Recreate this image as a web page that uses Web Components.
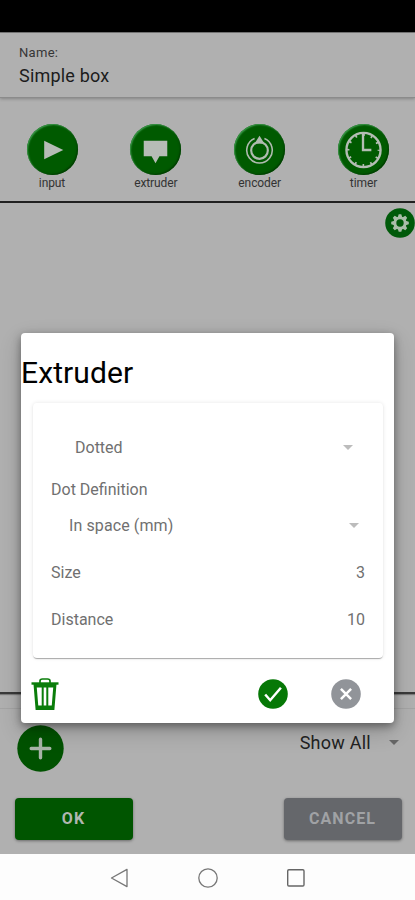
<!DOCTYPE html>
<html lang="en">
<head>
<meta charset="utf-8">
<title>Simple box</title>
<style>
html, body {
    margin: 0;
    height: 100%;
    overflow: hidden;
    background: #b0b0b0;
    font-family: Roboto, "Noto Sans", sans-serif;
}
</style>
</head>
<body>
<app-screen>
    <name-field slot="header" label="Name:" value="Simple box"></name-field>
    <tool-button slot="tools" icon="play" label="input"></tool-button>
    <tool-button slot="tools" icon="extruder" label="extruder"></tool-button>
    <tool-button slot="tools" icon="encoder" label="encoder"></tool-button>
    <tool-button slot="tools" icon="clock" label="timer"></tool-button>
    <app-icon slot="canvas" name="gear" size="30"></app-icon>
    <app-icon slot="filter" name="plus" size="47"></app-icon>
    <select-box slot="filter" class="show">Show All</select-box>
    <action-button slot="actions" color="#005500" textcolor="#b0b7b0">OK</action-button>
    <action-button slot="actions" color="#65676b" textcolor="#a0a2a5">CANCEL</action-button>
    <edit-dialog slot="dialog" heading="Extruder">
        <select-box class="first">Dotted</select-box>
        <field-row label="Dot Definition" style="height:40px"></field-row>
        <select-box class="second">In space (mm)</select-box>
        <field-row label="Size" value="3" style="height:62px"></field-row>
        <field-row label="Distance" value="10" style="height:32px"></field-row>
    </edit-dialog>
</app-screen>

<script>
const icons = {
    play: `<svg viewBox="0 0 52 52"><path fill="#b6bcb6" d="M17.500 17v19l19.500-9.500z"/></svg>`,
    extruder: `<svg viewBox="0 0 52 52"><path fill="#b6bcb6" d="M14 17h24v16h-8l-4 7-4-7h-8z"/></svg>`,
    encoder: `<svg viewBox="0 0 52 52" fill="none" stroke="#b0bbb0"><circle cx="26" cy="27" r="8.500" stroke-width="2.200"/><path stroke-width="1.600" d="M21 14.800a13 13 0 1 0 10 0"/><path fill="#b0bbb0" stroke="none" d="M26 12l-5 8h10z"/></svg>`,
    clock: `<svg viewBox="0 0 52 52" fill="none" stroke="#b4bdb4"><circle cx="26" cy="26.500" r="17.400" stroke-width="2.400"/><circle cx="26" cy="26.500" r="15.600" stroke-width="2.500" stroke-dasharray="1.800 6.368" stroke-dashoffset=".9"/><path stroke-width="2.400" d="M25.500 10v16.500H34"/></svg>`,
    gear: `<svg viewBox="0 0 30 30"><circle cx="15" cy="15" r="14.800" fill="#005a0a"/><g fill="#a9bda9"><circle cx="15" cy="15" r="6.600"/><g id="t"><path d="M12.700 9.500l1-3.300h2.600l1 3.300zM12.700 20.500l1 3.300h2.600l1-3.300zM9.500 12.700l-3.300 1v2.600l3.300 1zM20.500 12.700l3.300 1v2.600l-3.300 1z"/></g><use href="#t" transform="rotate(45 15 15)"/></g><circle cx="15" cy="15" r="3.700" fill="#005a0a"/></svg>`,
    plus: `<svg viewBox="0 0 47 47"><circle cx="23.500" cy="23.500" r="23.200" fill="#005200"/><path stroke="#a9b5a9" stroke-width="3.400" stroke-linecap="round" d="M23.500 14.200v18.600M14.200 23.500h18.600"/></svg>`,
    trash: `<svg viewBox="0 0 28 34"><g fill="none" stroke="#0a7d0a"><path stroke-width="1.700" d="M9 6V4q0-2 2.500-2h5Q19 2 19 4v2"/><path stroke-width="2.400" d="M.5 6.500h27"/><path stroke-width="3" d="M4 7l2 24.500h16L24 7"/><path stroke-width="2" d="M11.700 10v21M16.300 10v21"/><path stroke-width="4" d="M4.500 8.500h19M5.500 30.500h17"/></g></svg>`,
    check: `<svg viewBox="0 0 30 30"><circle cx="15" cy="15" r="14.800" fill="#067806"/><path fill="none" stroke="#fff" stroke-width="2.500" d="M7.200 15.500l5 5.700L22.900 8.800"/></svg>`,
    close: `<svg viewBox="0 0 30 30"><circle cx="15" cy="15" r="14.800" fill="#919499"/><path stroke="#fff" stroke-width="2.500" d="M9.900 9.900l10.200 10.200M20.100 9.900L9.900 20.100"/></svg>`,
    back: `<svg viewBox="0 0 20 20" fill="none" stroke="#777" stroke-width="1.300"><path stroke-linejoin="round" d="M17 1.400v17.200L1.500 10z"/></svg>`,
    home: `<svg viewBox="0 0 20 20" fill="none" stroke="#777" stroke-width="1.300"><circle cx="10" cy="10" r="9.200"/></svg>`,
    recent: `<svg viewBox="0 0 20 20" fill="none" stroke="#666" stroke-width="1.400"><rect x="1.700" y="1.700" width="16.300" height="16.300" rx="1.200"/></svg>`
};

class AppIcon extends HTMLElement {
    constructor() {
        super();
        this.attachShadow({ mode: "open" });
    }
    connectedCallback() {
        const size = this.getAttribute("size");
        const height = this.getAttribute("height") || size;
        this.shadowRoot.innerHTML = `
<style>
:host { display: block; flex: none; width: ${size}px; height: ${height}px; }
svg { display: block; width: 100%; height: 100%; }
</style>
${icons[this.getAttribute("name")]}`;
    }
}
window.customElements.define("app-icon", AppIcon);

class NameField extends HTMLElement {
    constructor() {
        super();
        this.attachShadow({ mode: "open" });
        this.shadowRoot.innerHTML = `
<style>
:host { display: flex; flex-direction: column; padding: 12px 19px 0; }
label { font-size: 13px; line-height: 16px; color: #363636; letter-spacing: .3px; }
span { font-size: 18px; line-height: 22px; margin-top: 4px; color: #1c1c1c; letter-spacing: .2px; }
</style>
<label>${this.getAttribute("label")}</label>
<span>${this.getAttribute("value")}</span>`;
    }
}
window.customElements.define("name-field", NameField);

class ToolButton extends HTMLElement {
    constructor() {
        super();
        this.attachShadow({ mode: "open" });
        this.shadowRoot.innerHTML = `
<style>
:host { display: flex; flex-direction: column; align-items: center; width: 52px; }
.disc {
    width: 51px;
    height: 51px;
    border-radius: 50%;
    background: #005a00;
    box-shadow: inset 1px 1px 1.500px #3c9a4c, inset -1px -1px 1.500px #003c00;
}
span { font-size: 12px; line-height: 14px; margin-top: 1px; color: #333; letter-spacing: -.1px; }
</style>
<div class="disc"><app-icon name="${this.getAttribute("icon")}" size="51"></app-icon></div>
<span>${this.getAttribute("label")}</span>`;
    }
}
window.customElements.define("tool-button", ToolButton);

class SelectBox extends HTMLElement {
    constructor() {
        super();
        this.attachShadow({ mode: "open" });
        this.shadowRoot.innerHTML = `
<style>
:host {
    display: flex;
    align-items: center;
    justify-content: space-between;
    box-sizing: border-box;
    font-size: 16px;
    color: #707070;
    --arrow: #bcbcbc;
}
:host(.first) { height: 44px; padding: 0 12px 0 24px; }
:host(.second) { height: 32px; padding: 0 6px 0 18px; letter-spacing: .1px; }
:host(.show) { font-size: 18px; gap: 18px; color: #222; letter-spacing: .25px; --arrow: #666; margin-top: -13px; }
i { border: 5.500px solid transparent; border-top: 5.500px solid var(--arrow); border-bottom: 0; }
</style>
<span><slot></slot></span><i></i>`;
    }
}
window.customElements.define("select-box", SelectBox);

class FieldRow extends HTMLElement {
    constructor() {
        super();
        this.attachShadow({ mode: "open" });
        this.shadowRoot.innerHTML = `
<style>
:host { display: flex; align-items: center; justify-content: space-between; font-size: 16px; color: #707070; }
</style>
<span>${this.getAttribute("label")}</span>
<span>${this.getAttribute("value") || ""}</span>`;
    }
}
window.customElements.define("field-row", FieldRow);

class ActionButton extends HTMLElement {
    constructor() {
        super();
        this.attachShadow({ mode: "open" });
        this.shadowRoot.innerHTML = `
<style>
:host { display: block; width: 118px; height: 42px; }
button {
    width: 100%;
    height: 100%;
    padding: 0 0 1px;
    border: 0;
    border-radius: 4px;
    font: 700 16px Roboto, sans-serif;
    letter-spacing: 1.100px;
    box-shadow: 0 1px 3px rgba(0, 0, 0, .4);
}
</style>
<button><slot></slot></button>`;
        const button = this.shadowRoot.querySelector("button");
        button.style.background = this.getAttribute("color");
        button.style.color = this.getAttribute("textcolor");
    }
}
window.customElements.define("action-button", ActionButton);

class EditDialog extends HTMLElement {
    constructor() {
        super();
        this.attachShadow({ mode: "open" });
        this.shadowRoot.innerHTML = `
<style>
:host {
    display: flex;
    flex-direction: column;
    box-sizing: border-box;
    width: 373px;
    height: 390px;
    border-radius: 4px;
    background: #fff;
    box-shadow: 0 3px 8px rgba(0, 0, 0, .38), 0 8px 22px rgba(0, 0, 0, .2);
}
h2 { margin: 22px 0 0; font-size: 30px; line-height: 36px; font-weight: 400; color: #000; letter-spacing: .1px; }
.card {
    margin: 12px 11px 0 12px;
    height: 255px;
    box-sizing: border-box;
    padding: 22px 18px 0;
    border-radius: 4px;
    box-shadow: 0 2px 1px -1px rgba(0, 0, 0, .2), 0 1px 1px rgba(0, 0, 0, .14), 0 0 4px rgba(0, 0, 0, .1);
}
.bar { display: flex; align-items: center; padding: 19px 33px 0 10px; }
.gap { flex: 1; }
.bar app-icon:last-child { margin-left: 43px; }
</style>
<h2>${this.getAttribute("heading")}</h2>
<div class="card"><slot></slot></div>
<div class="bar">
    <app-icon name="trash" size="28" height="34"></app-icon>
    <div class="gap"></div>
    <app-icon name="check" size="30"></app-icon>
    <app-icon name="close" size="30"></app-icon>
</div>`;
    }
}
window.customElements.define("edit-dialog", EditDialog);

class AppScreen extends HTMLElement {
    constructor() {
        super();
        this.attachShadow({ mode: "open" });
        this.shadowRoot.innerHTML = `
<style>
:host { display: flex; flex-direction: column; position: relative; width: 415px; height: 900px; background: #b0b0b0; }
.status { height: 32px; background: #000; border-bottom: 1px solid #777; }
header { height: 64px; border-bottom: 1px solid #8b8b8b; box-shadow: 0 1px 3px rgba(0, 0, 0, .25); }
.tools { height: 103px; box-sizing: border-box; display: flex; justify-content: space-between; padding: 26px 25.500px 0 26px; }
.canvas {
    height: 493px;
    box-sizing: border-box;
    display: flex;
    justify-content: flex-end;
    padding: 5px 0 0;
    border-top: 2px solid #202020;
    border-bottom: 2px solid #3a3a3a;
    box-shadow: 0 1px 1px rgba(0, 0, 0, .3);
}
footer { flex: 1; margin-top: 14px; border-top: 1px solid #a4a4a4; }
.filter { display: flex; align-items: center; justify-content: space-between; padding: 16px 16px 0 17px; }
.actions { display: flex; justify-content: space-between; padding: 26px 13.500px 0 14.500px; }
nav { height: 46px; box-sizing: border-box; padding-top: 2px; background: #fdfdfd; display: flex; justify-content: center; align-items: center; gap: 68px; }
.dialog { position: absolute; left: 21px; top: 333px; }
</style>
<div class="status"></div>
<header><slot name="header"></slot></header>
<div class="tools"><slot name="tools"></slot></div>
<div class="canvas"><slot name="canvas"></slot></div>
<footer>
    <div class="filter"><slot name="filter"></slot></div>
    <div class="actions"><slot name="actions"></slot></div>
</footer>
<nav>
    <app-icon name="back" size="20"></app-icon>
    <app-icon name="home" size="20"></app-icon>
    <app-icon name="recent" size="20"></app-icon>
</nav>
<div class="dialog"><slot name="dialog"></slot></div>`;
    }
}
window.customElements.define("app-screen", AppScreen);
</script>
</body>
</html>
